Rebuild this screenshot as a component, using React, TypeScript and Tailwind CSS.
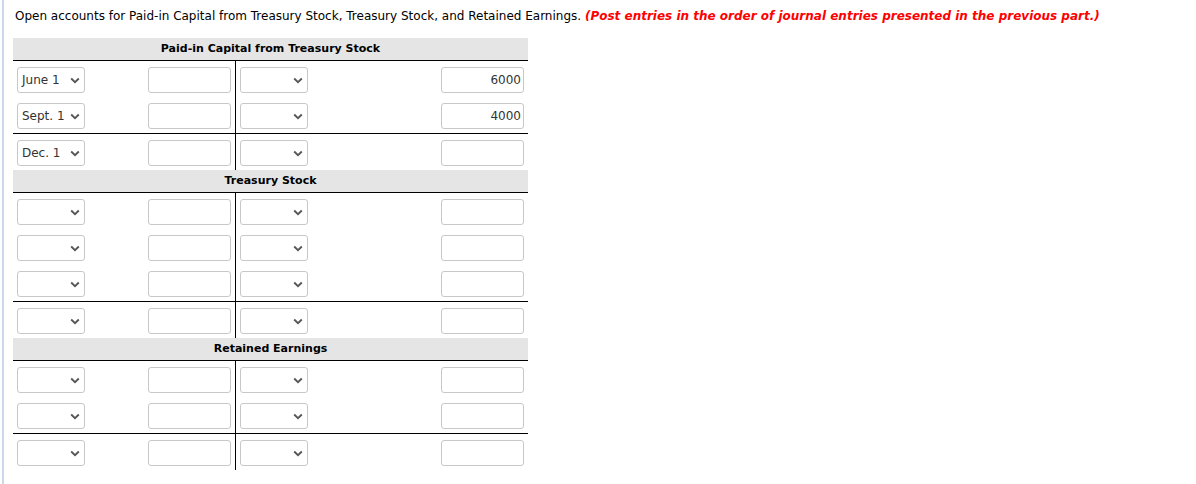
import React from "react";

interface Row {
  date?: string;
  credit?: string;
}

interface Account {
  title: string;
  groups: Row[][];
}

const ACCOUNTS: Account[] = [
  {
    title: "Paid-in Capital from Treasury Stock",
    groups: [
      [
        { date: "June 1", credit: "6000" },
        { date: "Sept. 1", credit: "4000" },
      ],
      [{ date: "Dec. 1" }],
    ],
  },
  {
    title: "Treasury Stock",
    groups: [[{}, {}, {}], [{}]],
  },
  {
    title: "Retained Earnings",
    groups: [[{}, {}], [{}]],
  },
];

function Chevron() {
  return (
    <svg width="10" height="7" viewBox="0 0 10 7" className="shrink-0">
      <path d="M1.2 1.5 L5 5.2 L8.8 1.5" fill="none" stroke="#555" strokeWidth="1.8" />
    </svg>
  );
}

function FakeSelect({ value }: { value?: string }) {
  return (
    <div className="w-[68px] h-[26px] border border-[#c8c8c8] rounded-[3px] bg-white flex items-center justify-between pl-[4px] pr-[4px] text-[12px] text-[#333]">
      <span className="whitespace-nowrap">{value ?? ""}</span>
      <Chevron />
    </div>
  );
}

function Amount({ value }: { value?: string }) {
  return (
    <div className="w-[83px] h-[26px] border border-[#c8c8c8] rounded-[3px] bg-white flex items-center justify-end pr-[2px] text-[12px] text-[#333]">
      {value ?? ""}
    </div>
  );
}

function TRow({ row }: { row: Row }) {
  return (
    <div className="flex h-[36px]">
      <div className="w-[223px] border-r border-black flex items-start justify-between pt-[6px] pl-[4px] pr-[4px]">
        <FakeSelect value={row.date} />
        <Amount />
      </div>
      <div className="flex-1 flex items-start justify-between pt-[6px] pl-[4px] pr-[4px]">
        <FakeSelect />
        <Amount value={row.credit} />
      </div>
    </div>
  );
}

function TAccount({ account }: { account: Account }) {
  return (
    <div>
      <div className="h-[23px] bg-[#e5e5e5] border-b border-black flex items-center justify-center text-[11px] font-bold text-black">
        {account.title}
      </div>
      {account.groups.map((group, gi) => (
        <div key={gi} className={gi > 0 ? "border-t border-black" : ""}>
          {group.map((row, ri) => (
            <TRow key={ri} row={row} />
          ))}
        </div>
      ))}
    </div>
  );
}

export default function App() {
  return (
    <div className="min-h-[484px] bg-white ml-[2px] border-l-2 border-[#c9d8ea] pl-[9px] font-['DejaVu_Sans',sans-serif]">
      <p className="pt-[8px] pl-[2px] text-[12px] leading-[16px] text-black">
        Open accounts for Paid-in Capital from Treasury Stock, Treasury Stock, and Retained Earnings.{" "}
        <span className="text-[#f00] font-bold italic">
          (Post entries in the order of journal entries presented in the previous part.)
        </span>
      </p>
      <div className="w-[515px] mt-[14px]">
        {ACCOUNTS.map((a) => (
          <TAccount key={a.title} account={a} />
        ))}
      </div>
    </div>
  );
}
